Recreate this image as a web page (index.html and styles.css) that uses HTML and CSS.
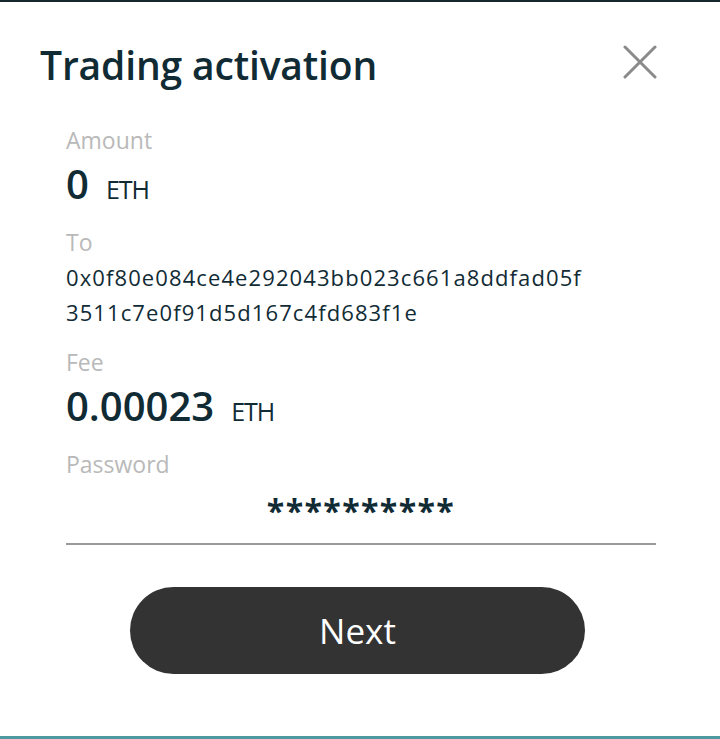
FILE: index.html
```html
<!DOCTYPE html>
<html lang="en">
<head>
    <meta charset="UTF-8">
    <meta name="viewport" content="width=device-width, initial-scale=1.0">
    <title>Trading activation</title>
    <link rel="stylesheet" href="styles.css">
</head>
<body>

<div class="dialog">
    <div class="header">
        <h1>Trading activation</h1>
        <button class="close" aria-label="Close">
            <svg width="34" height="34" viewBox="0 0 34 34">
                <path d="M2 2 L32 32 M32 2 L2 32" stroke="#8a8a8a" stroke-width="3" stroke-linecap="round" fill="none"/>
            </svg>
        </button>
    </div>

    <div class="details">
        <div class="field">
            <div class="label">Amount</div>
            <div class="value"><span class="num">0</span><span class="unit">ETH</span></div>
        </div>

        <div class="field">
            <div class="label">To</div>
            <div class="address">0x0f80e084ce4e292043bb023c661a8ddfad05f<br>3511c7e0f91d5d167c4fd683f1e</div>
        </div>

        <div class="field">
            <div class="label">Fee</div>
            <div class="value"><span class="num">0.00023</span><span class="unit">ETH</span></div>
        </div>

        <div class="field">
            <div class="label">Password</div>
            <div class="password">**********</div>
        </div>
    </div>

    <div class="actions">
        <button class="next">Next</button>
    </div>
</div>

</body>
</html>
```

FILE: styles.css
```css
html, body {
    margin: 0;
    padding: 0;
    background-color: #fff;
}
body {
    font-family: "Open Sans", "Noto Sans", sans-serif;
    color: #112b35;
}
.dialog {
    box-sizing: border-box;
    height: 739px;
    border-top: 2px solid #16282d;
    border-bottom: 3px solid #4e9aa0;
    display: flex;
    flex-direction: column;
}
.header {
    display: flex;
    align-items: flex-start;
    justify-content: space-between;
    padding: 38px 63px 0 40px;
}
h1 {
    margin: 0;
    font-size: 39px;
    font-weight: 600;
    line-height: 50px;
    letter-spacing: -0.15px;
}
.close {
    background: none;
    border: none;
    padding: 0;
    margin-top: 5px;
    width: 34px;
    height: 34px;
    cursor: pointer;
}
.close svg {
    display: block;
}
.details {
    padding: 35px 64px 0 66px;
}
.field + .field {
    margin-top: 18px;
}
.label {
    font-size: 23px;
    line-height: 30px;
    color: #b9b9b9;
}
.value {
    display: flex;
    align-items: baseline;
    margin-top: 4px;
}
.num {
    font-size: 40px;
    font-weight: 600;
    line-height: 50px;
}
.unit {
    font-size: 25px;
    letter-spacing: -1px;
    margin-left: 17px;
}
.address {
    font-size: 22px;
    line-height: 35px;
    font-weight: 500;
    letter-spacing: 1.1px;
    margin: 3px 0 -1px;
}
.password {
    height: 64px;
    border-bottom: 2px solid #9a9a9a;
    text-align: center;
    font-size: 32px;
    font-weight: 700;
    line-height: 64px;
    letter-spacing: 1.4px;
}
.actions {
    display: flex;
    justify-content: center;
    padding: 42px 5px 0 0;
}
.next {
    width: 455px;
    height: 87px;
    border: none;
    border-radius: 44px;
    background-color: #333333;
    color: #fff;
    font-family: "Open Sans", sans-serif;
    font-size: 35px;
    cursor: pointer;
}
```
